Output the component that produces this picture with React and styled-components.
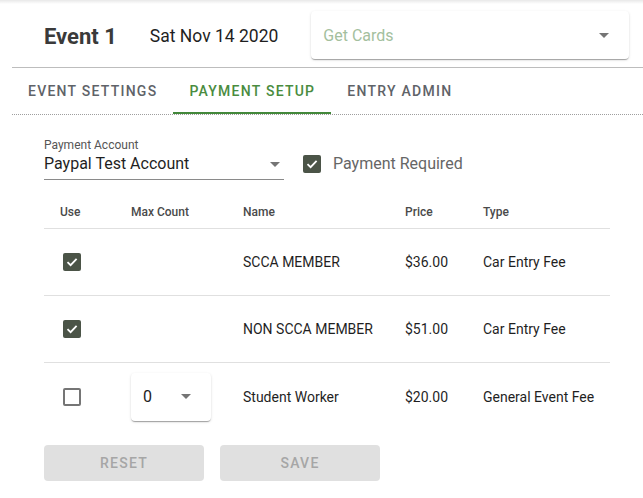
import React from "react";
import styled, { createGlobalStyle } from "styled-components";

const Global = createGlobalStyle`
  html, body { margin: 0; padding: 0; background: #fff; }
  body { font-family: Roboto, "Liberation Sans", Arial, sans-serif; }
  * { box-sizing: border-box; }
`;

const Page = styled.div`
  width: 643px;
  height: 498px;
  overflow: hidden;
  padding-left: 12px;
  background: linear-gradient(to bottom, rgba(0,0,0,0.09), rgba(0,0,0,0) 4px) , #fff;
`;

const Header = styled.div`
  display: flex;
  align-items: center;
  height: 68px;
  padding: 11px 0 8px 32px;
  border-bottom: 1px solid #bdbdbd;
`;

const Title = styled.div`
  flex: none;
  white-space: nowrap;
  font-size: 22px;
  font-weight: 700;
  color: #3a3a3a;
  margin-right: 33px;
  padding-top: 2px;
`;

const DateText = styled.div`
  flex: none;
  white-space: nowrap;
  font-size: 17.5px;
  color: #1f1f1f;
  margin-right: 33px;
  padding-top: 2px;
`;

const CardSelect = styled.div`
  flex: none;
  display: flex;
  align-items: center;
  justify-content: space-between;
  background: #fff;
  border-radius: 4px;
  box-shadow: 0 2px 1px -1px rgba(0,0,0,0.2), 0 1px 1px 0 rgba(0,0,0,0.14), 0 1px 3px 0 rgba(0,0,0,0.12);
  height: ${p => p.$h}px;
  width: ${p => p.$w}px;
  padding: 0 ${p => p.$pr}px 0 12px;
  font-size: 16px;
  color: ${p => (p.$placeholder ? "#a4bf9e" : "#222")};
`;

const Arrow = () => (
  <svg width="10" height="5" viewBox="0 0 10 5">
    <path d="M0 0 L5 5 L10 0 Z" fill="#757575" />
  </svg>
);

const Tabs = styled.div`
  display: flex;
  height: 47px;
  border-bottom: 1px dotted #9e9e9e;
`;

const Tab = styled.div`
  display: flex;
  align-items: center;
  justify-content: center;
  padding: 0 16px;
  height: 100%;
  font-size: 14px;
  font-weight: 500;
  letter-spacing: 1.25px;
  color: ${p => (p.$active ? "#4a8c3f" : "#5f6368")};
  border-bottom: 2px solid ${p => (p.$active ? "#43883a" : "transparent")};
  margin-bottom: -1px;
  padding-top: 2px;
`;

const Content = styled.div`
  padding: 23px 21px 0 32px;
`;

const AccountRow = styled.div`
  display: flex;
  align-items: flex-end;
  gap: 19px;
`;

const Field = styled.div`
  width: 240px;
  border-bottom: 1px solid #8a8a8a;
  padding-bottom: 5px;
`;

const FieldLabel = styled.div`
  font-size: 12px;
  color: #555;
  line-height: 14px;
`;

const FieldValue = styled.div`
  display: flex;
  align-items: center;
  justify-content: space-between;
  font-size: 16px;
  color: #1f1f1f;
  line-height: 20px;
  padding-right: 4px;
  margin-top: 2px;
`;

const CheckLabel = styled.label`
  display: flex;
  align-items: center;
  gap: 12px;
  font-size: 16px;
  color: #666;
  padding-bottom: 7px;
`;

const Box = styled.span`
  display: inline-flex;
  align-items: center;
  justify-content: center;
  width: 18px;
  height: 18px;
  border-radius: 2px;
  background: ${p => (p.$checked ? "#4b5447" : "transparent")};
  border: ${p => (p.$checked ? "none" : "2px solid #757575")};
  flex: none;
`;

const Check = ({ checked }) => (
  <Box $checked={checked}>
    {checked && (
      <svg width="14" height="14" viewBox="0 0 14 14">
        <path d="M2.5 7.2 L5.6 10.2 L11.6 3.8" stroke="#fff" strokeWidth="1.8" fill="none" />
      </svg>
    )}
  </Box>
);

const Table = styled.div`
  width: 566px;
  margin-top: 16px;
`;

const Row = styled.div`
  display: grid;
  grid-template-columns: 71px 112px 162px 78px 143px;
  align-items: center;
  height: ${p => (p.$head ? 33 : 67)}px;
  border-bottom: ${p => (p.$last ? "none" : "1px solid #e0e0e0")};
  font-size: ${p => (p.$head ? "12px" : "14px")};
  font-weight: ${p => (p.$head ? 500 : 400)};
  color: ${p => (p.$head ? "#4a4a4a" : "#1f1f1f")};
`;

const Cell = styled.div`
  padding-left: 16px;
`;

const CheckCell = styled.div`
  padding-left: 19px;
  display: flex;
`;

const Buttons = styled.div`
  display: flex;
  gap: 16px;
  margin-top: 15px;
`;

const Button = styled.button`
  width: 160px;
  height: 36px;
  border: none;
  border-radius: 4px;
  background: #e0e0e0;
  color: #a6a6a6;
  font-family: inherit;
  font-size: 14px;
  font-weight: 500;
  letter-spacing: 1.25px;
`;

const rows = [
  { use: true, name: "SCCA MEMBER", price: "$36.00", type: "Car Entry Fee" },
  { use: true, name: "NON SCCA MEMBER", price: "$51.00", type: "Car Entry Fee" },
  { use: false, count: "0", name: "Student Worker", price: "$20.00", type: "General Event Fee" },
];

export default function App() {
  return (
    <Page>
      <Global />
      <Header>
        <Title>Event 1</Title>
        <DateText>Sat Nov 14 2020</DateText>
        <CardSelect $placeholder $w={318} $h={48} $pr={20}>
          Get Cards
          <Arrow />
        </CardSelect>
      </Header>
      <Tabs>
        <Tab>EVENT SETTINGS</Tab>
        <Tab $active>PAYMENT SETUP</Tab>
        <Tab>ENTRY ADMIN</Tab>
      </Tabs>
      <Content>
        <AccountRow>
          <Field>
            <FieldLabel>Payment Account</FieldLabel>
            <FieldValue>
              Paypal Test Account
              <Arrow />
            </FieldValue>
          </Field>
          <CheckLabel>
            <Check checked />
            Payment Required
          </CheckLabel>
        </AccountRow>
        <Table>
          <Row $head>
            <Cell>Use</Cell>
            <Cell>Max Count</Cell>
            <Cell>Name</Cell>
            <Cell>Price</Cell>
            <Cell>Type</Cell>
          </Row>
          {rows.map((r, i) => (
            <Row key={r.name} $last={i === rows.length - 1}>
              <CheckCell>
                <Check checked={r.use} />
              </CheckCell>
              <Cell>
                {r.count !== undefined && (
                  <CardSelect $w={80} $h={48} $pr={20}>
                    {r.count}
                    <Arrow />
                  </CardSelect>
                )}
              </Cell>
              <Cell>{r.name}</Cell>
              <Cell>{r.price}</Cell>
              <Cell>{r.type}</Cell>
            </Row>
          ))}
        </Table>
        <Buttons>
          <Button>RESET</Button>
          <Button>SAVE</Button>
        </Buttons>
      </Content>
    </Page>
  );
}
